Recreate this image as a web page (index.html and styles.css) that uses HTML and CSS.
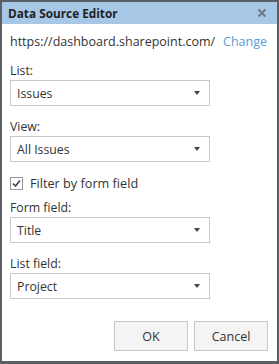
FILE: index.html
```html
<!DOCTYPE html>
<html>
<head>
<meta charset="utf-8">
<link rel="stylesheet" href="styles.css">
</head>
<body>
<div class="dialog">
  <div class="titlebar">
    <span class="title">Data Source Editor</span>
    <svg class="close" width="10" height="10" viewBox="0 0 10 10"><path d="M1.5 1.5 L8.5 8.5 M8.5 1.5 L1.5 8.5" stroke="#6d7a88" stroke-width="2"/></svg>
  </div>
  <div class="content">
    <div class="url-row"><span class="url">https://dashboard.sharepoint.com/</span><a class="change">Change</a></div>
    <div class="field">
      <div class="label">List:</div>
      <div class="select"><span>Issues</span><span class="arrow"></span></div>
    </div>
    <div class="field">
      <div class="label">View:</div>
      <div class="select"><span>All Issues</span><span class="arrow"></span></div>
    </div>
    <div class="check-row">
      <span class="checkbox"><svg width="11" height="11" viewBox="0 0 11 11"><path d="M2 5.5 L4.5 8 L9 2.5" fill="none" stroke="#444" stroke-width="1.6"/></svg></span>
      <span>Filter by form field</span>
    </div>
    <div class="field">
      <div class="label">Form field:</div>
      <div class="select"><span>Title</span><span class="arrow"></span></div>
    </div>
    <div class="field">
      <div class="label">List field:</div>
      <div class="select"><span>Project</span><span class="arrow"></span></div>
    </div>
    <div class="buttons">
      <button class="btn">OK</button>
      <button class="btn">Cancel</button>
    </div>
  </div>
</div>
</body>
</html>
```
FILE: styles.css
```css
html, body { margin: 0; padding: 0; }
body { width: 279px; height: 364px; background: #fff; font-family: "Open Sans", "Noto Sans", sans-serif; color: #333; }
.dialog { box-sizing: border-box; width: 279px; height: 364px; border: 2px solid #5b5f63; border-bottom-width: 3px; background: #fff; display: flex; flex-direction: column; }
.titlebar { height: 22px; background: #a6c7e6; display: flex; align-items: center; justify-content: space-between; padding: 0 10px 0 6px; }
.title { font-weight: 700; font-size: 11.8px; color: #222; }
.close { display: block; }
.content { padding: 0 10px 0 8px; display: flex; flex-direction: column; flex: 1; }
.url-row { display: flex; justify-content: space-between; font-size: 12.5px; margin-top: 8px; height: 18px; align-items: center; }
.url { color: #333; }
.change { color: #5b9bd5; }
.field { display: flex; flex-direction: column; }
.label { font-size: 12.3px; margin-top: 11px; height: 19px; line-height: 19px; }
.select { box-sizing: border-box; width: 200px; height: 26px; border: 1px solid #c8c8c8; display: flex; align-items: center; justify-content: space-between; padding: 0 9px 0 6px; font-size: 12.3px; }
.arrow { width: 0; height: 0; border-left: 3.5px solid transparent; border-right: 3.5px solid transparent; border-top: 4px solid #444; }
.check-row { display: flex; align-items: center; gap: 7px; font-size: 12.7px; margin-top: 12px; height: 18px; }
.checkbox { box-sizing: border-box; width: 13px; height: 13px; border: 1px solid #999; display: flex; align-items: center; justify-content: center; }
.checkbox svg { display: block; }
.check-row + .field .label { margin-top: 6px; }
.buttons { display: flex; justify-content: flex-end; gap: 6px; margin-top: auto; margin-bottom: 10px; margin-right: -1px; }
.btn { box-sizing: border-box; width: 74px; height: 30px; border: 1px solid #c8c8c8; background: #f4f4f4; font-family: inherit; font-size: 12.5px; color: #333; padding: 0; }
```
